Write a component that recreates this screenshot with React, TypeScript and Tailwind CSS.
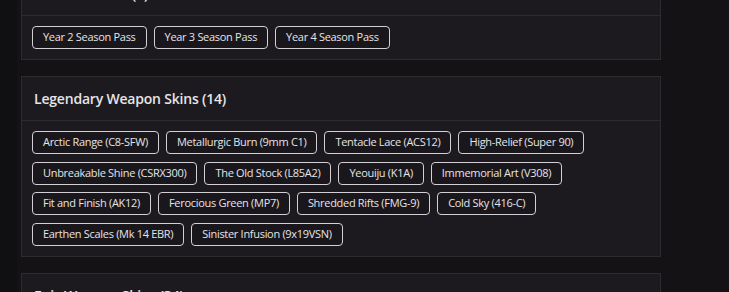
const seasonPasses = ['Year 2 Season Pass', 'Year 3 Season Pass', 'Year 4 Season Pass'];

const legendarySkins = [
  'Arctic Range (C8-SFW)',
  'Metallurgic Burn (9mm C1)',
  'Tentacle Lace (ACS12)',
  'High-Relief (Super 90)',
  'Unbreakable Shine (CSRX300)',
  'The Old Stock (L85A2)',
  'Yeouiju (K1A)',
  'Immemorial Art (V308)',
  'Fit and Finish (AK12)',
  'Ferocious Green (MP7)',
  'Shredded Rifts (FMG-9)',
  'Cold Sky (416-C)',
  'Earthen Scales (Mk 14 EBR)',
  'Sinister Infusion (9x19VSN)',
];

function Tag({ label }: { label: string }) {
  return (
    <span className="inline-flex h-[23px] items-center rounded-[4px] border border-[#d2d0d5] bg-[#19171b] px-[10px] text-[11px] tracking-[-0.3px] text-[#e6e4e8]">
      {label}
    </span>
  );
}

function Card({ title, items, className = '' }: { title: string; items: string[]; className?: string }) {
  return (
    <section className={`border border-[#2d2b30] bg-[#1c1a1e] ${className}`}>
      <div className="flex h-[44px] items-center border-b border-[#2d2b30] px-3">
        <h2 className="text-[14px] font-semibold tracking-[-0.2px] text-[#e6e4e8]">{title}</h2>
      </div>
      <div className="flex flex-wrap gap-x-[7px] gap-y-[7.5px] p-[10px]">
        {items.map((item) => (
          <Tag key={item} label={item} />
        ))}
      </div>
    </section>
  );
}

export default function App() {
  return (
    <div className="flex h-[292px] w-[729px] overflow-hidden bg-[#141215]" style={{ fontFamily: '"Open Sans", sans-serif' }}>
      <div className="w-[17px] shrink-0 bg-[#100f11]" />
      <main className="ml-[4px] w-[640px] shrink-0">
        <Card title="Season Passes (3)" items={seasonPasses} className="-mt-[29px]" />
        <Card title="Legendary Weapon Skins (14)" items={legendarySkins} className="mt-4" />
        <Card title="Epic Weapon Skins (34)" items={[]} className="mt-4" />
      </main>
    </div>
  );
}
